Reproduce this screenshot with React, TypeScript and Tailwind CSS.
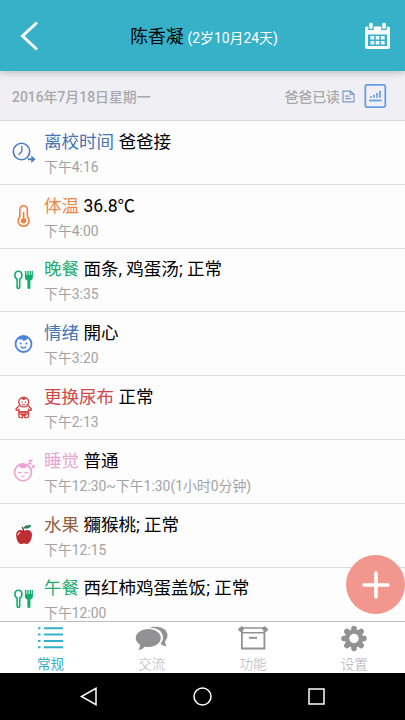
import type { ReactNode } from "react";

const ClockIcon = () => (
	<svg width="24" height="24" viewBox="0 0 24 24" fill="none" stroke="#4a7cc4" strokeWidth="1.6">
		<circle cx="9.5" cy="11.5" r="8.2" />
		<path d="M9.8 6.500v5l-3 3" strokeWidth="1.400" strokeLinecap="round" />
		<path d="M16 19.300h5" strokeWidth="1.900" />
		<path d="M19.300 15.600l4.200 3.700-4.200 3.700z" fill="#4a7cc4" stroke="none" />
	</svg>
);

const ThermometerIcon = () => (
	<svg width="24" height="24" viewBox="0 0 24 24" fill="none" stroke="#ee8244" strokeWidth="1.600">
		<path d="M7.800 5.500a3.800 3.800 0 0 1 7.600 0v7.300a5.500 5.500 0 1 1-7.600 0z" />
		<path d="M11.600 8v7" />
		<circle cx="11.600" cy="16.800" r="2.700" fill="#ee8244" stroke="none" />
	</svg>
);

const MealIcon = () => (
	<svg width="24" height="24" viewBox="0 0 24 24" fill="none" stroke="#12ae70" strokeWidth="1.600">
		<path d="M5.100 11.200C1.600 8.800 2.400 3.300 6.400 3.300s4.800 5.500 1.300 7.900v8q0 1.200-1.300 1.200t-1.300-1.200z" />
		<path d="M12.900 3v6.500c0 2 1.400 2.700 2.500 2.900v7.300q0 1.400 1.500 1.400t1.500-1.400v-7.300c1.100-.2 2.500-.9 2.500-2.900V3h-1.100v4h-.6V3H18v4h-.6V3h-1.100v4h-.6V3h-1.100v4H14V3z" fill="#12ae70" stroke="none" />
	</svg>
);

const BabyFaceIcon = () => (
	<svg width="24" height="24" viewBox="0 0 24 24" fill="none" stroke="#4a82de" strokeWidth="1.800">
		<circle cx="11.500" cy="12" r="8" />
		<path d="M6.500 6.500Q11 2.500 15.800 5.200q-.5 3.300-4.600 3.500L9.500 6.500 8.800 8.200z" fill="#4a82de" stroke="none" />
		<circle cx="8.600" cy="11.600" r="1" fill="#4a82de" stroke="none" />
		<circle cx="14.400" cy="11.600" r="1" fill="#4a82de" stroke="none" />
		<path d="M8.800 14.500q2.700 3 5.400 0" strokeWidth="1.300" />
	</svg>
);

const DiaperIcon = () => (
	<svg width="24" height="24" viewBox="0 0 24 24" fill="none" stroke="#d54848" strokeWidth="1.400">
		<circle cx="11.700" cy="6" r="4.900" />
		<path d="M9.300 2q2.400-1.500 4.800 0-.8 2.500-2.600 2-1.500 0-2.200-2z" fill="#d54848" stroke="none" />
		<path d="M9.500 6h1M12.900 6h1" />
		<path d="M10 8.300q1.700 1.200 3.400 0" strokeWidth="1" />
		<path d="M7.500 9.500l-3.300 3.200q-.6 1.800 1.200 1.600l1.500-.8v6.800q0 1.300 1.300 1.300h2.300v-2h2.400v2h2.300q1.300 0 1.300-1.300v-6.800l1.500.8q1.800.2 1.200-1.600L15.900 9.500" />
		<path d="M6.900 15h9.600v2.800l-3.300 2.300h-3l-3.300-2.300z" fill="#d54848" stroke="none" />
		<path d="M8.500 17.300h1.200M11.100 17.300h1.200M13.700 17.300h1.200" stroke="#fff" strokeWidth=".9" />
	</svg>
);

const SleepIcon = () => (
	<svg width="24" height="24" viewBox="0 0 24 24" fill="none" stroke="#f09fd5" strokeWidth="1.600">
		<circle cx="11" cy="13.300" r="8.400" />
		<path d="M6.600 6.800q4.400-3.400 8.800 0-1.700 2.700-4 2.100-2.800.7-4.800-2.100z" fill="#f09fd5" stroke="none" />
		<path d="M6.200 13q1.700 1.700 3.400 0M12.500 13q1.700 1.700 3.400 0" strokeWidth="1.300" />
		<path d="M9.600 17.100q1.400 1 2.800 0" strokeWidth="1.200" />
		<path d="M16.600 1.300h3.200l-3.200 3.600h3.400M20.300 6.700h1.800l-1.800 2h2" strokeWidth="1.300" />
	</svg>
);

const AppleIcon = () => (
	<svg width="24" height="24" viewBox="0 0 24 24">
		<path d="M11.700 8.200C8.500 5.800 4 7.500 4.100 11.800c.1 4 2 9.300 5.100 9.300 1.200 0 1.600-.5 2.700-.5s1.500.5 2.700.5c3 0 5.300-5.300 5.400-9.300.1-4.300-4.700-6-8.300-3.600z" fill="#c02e35" />
		<path d="M6 12.300q0-2.500 2.300-3" fill="none" stroke="#f3b5b6" strokeWidth="1.300" />
		<path d="M11.800 9.300Q11.700 5.500 10 4" fill="none" stroke="#6c3428" strokeWidth="1.200" />
		<path d="M11.200 5.200q2.300-4 8.200-3-2 4.500-8.200 3z" fill="#25855a" />
	</svg>
);

type Entry = { icon: ReactNode; label: string; color: string; value: string; time: string };

const entries: Entry[] = [
	{ icon: <ClockIcon />, label: "离校时间", color: "text-[#4675b3]", value: "爸爸接", time: "下午4:16" },
	{ icon: <ThermometerIcon />, label: "体温", color: "text-[#ee8746]", value: "36.8℃", time: "下午4:00" },
	{ icon: <MealIcon />, label: "晚餐", color: "text-[#20ab70]", value: "面条, 鸡蛋汤; 正常", time: "下午3:35" },
	{ icon: <BabyFaceIcon />, label: "情绪", color: "text-[#4675b3]", value: "開心", time: "下午3:20" },
	{ icon: <DiaperIcon />, label: "更换尿布", color: "text-[#d24648]", value: "正常", time: "下午2:13" },
	{ icon: <SleepIcon />, label: "睡觉", color: "text-[#eaa6d0]", value: "普通", time: "下午12:30~下午1:30(1小时0分钟)" },
	{ icon: <AppleIcon />, label: "水果", color: "text-[#93603f]", value: "獼猴桃; 正常", time: "下午12:15" },
	{ icon: <MealIcon />, label: "午餐", color: "text-[#20ab70]", value: "西红柿鸡蛋盖饭; 正常", time: "下午12:00" },
];

const Header = () => (
	<header className="relative z-10 flex h-[71px] shrink-0 items-center justify-between bg-[#36b1c8] pr-[14px] pl-5 shadow-[0_1px_8px_rgba(0,0,0,0.25)]">
		<svg width="20" height="30" viewBox="0 0 20 30" fill="none" stroke="#fff" strokeWidth="3">
			<path d="M17 1.500L2.500 15 17 28.500" />
		</svg>
		<h1 className="flex items-baseline gap-1 pt-[3px] pl-1 text-[17.800px] leading-6 text-black">
			陈香凝
			<span className="text-[13.900px] text-white">(2岁10月24天)</span>
		</h1>
		<svg width="27" height="28" viewBox="0 0 27 28">
			<path d="M3 4.500h21q2 0 2 2V25q0 2-2 2H3q-2 0-2-2V6.500q0-2 2-2z" fill="#fff" />
			<path d="M4 12.500h19V24H4z" fill="#36b1c8" />
			<path d="M4.300 0h5.400v8H4.300zM17.300 0h5.400v8h-5.400z" fill="#36b1c8" />
			<rect x="5.300" y=".8" width="3.400" height="6.200" rx="1.400" fill="#fff" />
			<rect x="18.300" y=".8" width="3.400" height="6.200" rx="1.400" fill="#fff" />
			<path d="M6.500 14h3.700v3.500H6.500zM11.700 14h3.700v3.500h-3.700zM16.900 14h3.700v3.500h-3.700zM6.500 19h3.700v3.500H6.500zM11.700 19h3.700v3.500h-3.700zM16.900 19h3.700v3.500h-3.700z" fill="#fff" />
		</svg>
	</header>
);

const DateBar = () => (
	<div className="flex h-[50px] shrink-0 items-center justify-between border-b border-[#dadade] bg-[#efeff4] pr-[18px] pl-3 text-[13.900px] font-medium text-[#a9a9ad]">
		<p className="pt-[3px]">2016年7月18日星期一</p>
		<div className="flex items-center">
			<span className="pt-[3px]">爸爸已读</span>
			<svg className="mt-0.5 ml-[2px]" width="13" height="13" viewBox="0 0 13 13" fill="none" stroke="#7f98c4" strokeWidth="1.200">
				<path d="M1 1.200h7.500L12 4.300v7.500H1zM8.300 1.200v3.300H12M3.300 6.200h4M3.300 8.700h6" />
			</svg>
			<svg className="ml-[9px]" width="23" height="24" viewBox="0 0 23 24" fill="none" stroke="#689de3" strokeWidth="1.800">
				<rect x="1.300" y=".9" width="20" height="22.200" rx="1.500" />
				<path d="M5 16.500h12.500" />
				<path d="M7 13.800v-1.800M10 13.800v-3M13 13.800V9M16 13.800V6.800" strokeWidth="1.700" />
			</svg>
		</div>
	</div>
);

const EntryRow = ({ icon, label, color, value, time }: Entry) => (
	<li className="flex h-[63.800px] shrink-0 items-center border-b border-[#dcdcde] pl-3">
		<span className="w-8 shrink-0">{icon}</span>
		<div className="pt-[3px] whitespace-nowrap">
			<p className="text-[17.550px] leading-6 text-black">
				<span className={color}>{label}</span> {value}
			</p>
			<p className="pt-0.5 text-[13.900px] leading-[22px] text-[#a2a2a4]">{time}</p>
		</div>
	</li>
);

const tabs = [
	{
		name: "常规",
		icon: (
			<svg width="32" height="27" viewBox="0 0 32 27" stroke="#36b1c8" strokeWidth="2">
				<path d="M3 3.200h2.500M9 3.200h19M3 9.600h2.500M9 9.600h19M3 15.900h2.500M9 15.900h19M3 22.200h2.500M9 22.200h19" />
			</svg>
		),
	},
	{
		name: "交流",
		icon: (
			<svg width="34" height="27" viewBox="0 0 34 27" fill="#929295">
				<path d="M15 2.800C20 .3 32.200 2 32.500 10c.1 3-1.400 5-2.500 6.300.1 2 .8 3.500 1.700 5-3-.2-4.500-1-6-2.500q2.800-3.500 2.300-7C27.300 6 22 2.800 15 2.800z" />
				<path d="M13.300 4c7 0 12.500 4 12.500 9.100s-5.500 9-12.500 9c-1.300 0-2.500-.1-3.700-.4-1.700 2.200-4 3.200-6.400 3.400 1.300-1.700 1.900-3.500 1.800-5.600-2.600-1.500-4.300-3.800-4.300-6.400C.7 8 6.300 4 13.300 4z" />
			</svg>
		),
	},
	{
		name: "功能",
		icon: (
			<svg width="32" height="27" viewBox="0 0 32 27" fill="none" stroke="#929295" strokeWidth="1.800">
				<path d="M4.900 5v18.500h22.500V5" />
				<path d="M5.500 3h21.300M5 7.800h22.300" strokeWidth="1.600" />
				<path d="M2 5.700L6.200 2.500M30.200 5.700L26 2.500" strokeWidth="4" />
				<path d="M12 12.800h8" strokeWidth="2" />
			</svg>
		),
	},
	{
		name: "设置",
		icon: (
			<svg width="28" height="27" viewBox="0 0 28 27">
				<g stroke="#929295" strokeWidth="5.600" strokeLinecap="round">
					<path d="M14 3.500v20M4 13.500h20M6.900 6.400l14.200 14.200M21.100 6.400L6.900 20.600" />
				</g>
				<circle cx="14" cy="13.500" r="9.300" fill="#929295" />
				<circle cx="14" cy="13.500" r="4.700" fill="#fff" />
			</svg>
		),
	},
];

const TabBar = () => (
	<nav className="grid h-[52px] shrink-0 grid-cols-4 border-t border-[#bcbcbe] bg-white">
		{tabs.map((tab, i) => (
			<div key={tab.name} className={`flex flex-col items-center pt-[3px] text-[13.600px] leading-5 ${i === 0 ? "text-[#36b1c8]" : "font-light text-[#b3b0b7]"}`}>
				{tab.icon}
				<span className="pt-0.5">{tab.name}</span>
			</div>
		))}
	</nav>
);

const SystemBar = () => (
	<div className="flex h-[47px] shrink-0 items-center justify-center gap-[94px] bg-black">
		<svg width="20" height="20" viewBox="0 0 20 20" fill="none" stroke="#fff" strokeWidth="1.500">
			<path d="M17 1.300v16.400L2.500 9.500z" />
		</svg>
		<svg width="20" height="20" viewBox="0 0 20 20" fill="none" stroke="#fff" strokeWidth="1.500">
			<circle cx="9.500" cy="9.500" r="8.500" />
		</svg>
		<svg width="20" height="20" viewBox="0 0 20 20" fill="none" stroke="#fff" strokeWidth="1.500">
			<rect x="2" y="2" width="15" height="15" />
		</svg>
	</div>
);

const App = () => {
	return (
		<main className="flex h-[720px] w-[405px] flex-col overflow-hidden bg-[#fdfdfd] font-[Roboto,'Noto_Sans_CJK_SC',sans-serif]">
			<Header />
			<DateBar />
			<section className="relative min-h-0 flex-1">
				<ul className="flex h-full flex-col overflow-hidden">
					{entries.map((entry) => (
						<EntryRow key={entry.time} {...entry} />
					))}
				</ul>
				<button className="absolute right-0 bottom-[7px] flex size-[59px] items-center justify-center rounded-full bg-[#f1978e]">
					<svg width="28" height="28" viewBox="0 0 28 28" stroke="#fff" strokeWidth="3.600" strokeLinecap="round">
						<path d="M14 2v24M2 14h24" />
					</svg>
				</button>
			</section>
			<TabBar />
			<SystemBar />
		</main>
	);
};

export default App;
